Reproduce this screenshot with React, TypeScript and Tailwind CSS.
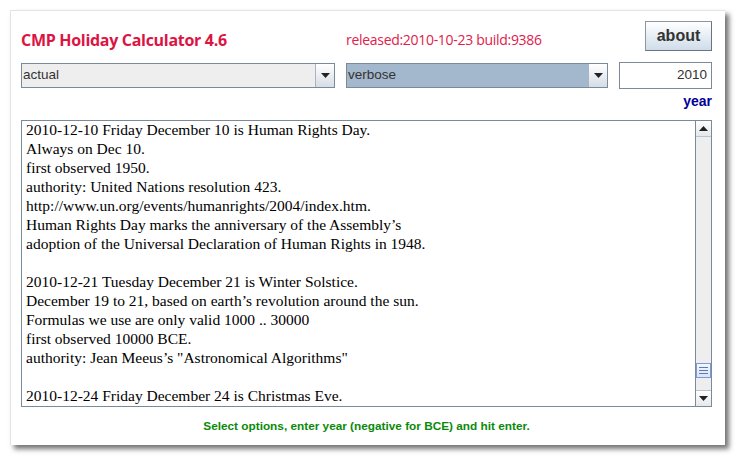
const lines = [
  "2010-12-10 Friday December 10 is Human Rights Day.",
  "Always on Dec 10.",
  "first observed 1950.",
  "authority: United Nations resolution 423.",
  "http://www.un.org/events/humanrights/2004/index.htm.",
  "Human Rights Day marks the anniversary of the Assembly\u2019s",
  "adoption of the Universal Declaration of Human Rights in 1948.",
  "",
  "2010-12-21 Tuesday December 21 is Winter Solstice.",
  "December 19 to 21, based on earth\u2019s revolution around the sun.",
  "Formulas we use are only valid 1000 .. 30000",
  "first observed 10000 BCE.",
  "authority: Jean Meeus\u2019s \"Astronomical Algorithms\"",
  "",
  "2010-12-24 Friday December 24 is Christmas Eve.",
];

function Arrow({ down = true }: { down?: boolean }) {
  return (
    <svg width="9" height="5" viewBox="0 0 9 5">
      <path d={down ? "M0 0h9L4.5 5z" : "M0 5h9L4.5 0z"} fill="#222" />
    </svg>
  );
}

function Combo({ label, bg, width }: { label: string; bg: string; width: string }) {
  return (
    <div className={`flex h-[25px] ${width} border border-[#7a8a99] ${bg}`}>
      <div className="flex flex-1 items-center pl-[1px] text-[13.5px] text-[#333]">{label}</div>
      <div className="flex w-[19px] items-center justify-center border-l border-[#a8b4c0] bg-gradient-to-b from-[#ffffff] to-[#d6dde6]">
        <Arrow />
      </div>
    </div>
  );
}

export default function App() {
  return (
    <div className="h-[455px] w-[735px] bg-white pl-[10px] pt-[10px] font-['Liberation_Sans',Arial,sans-serif]">
      <div className="flex h-[435px] w-[715px] flex-col border-l border-t border-[#e4e4e4] bg-white pl-[10px] pr-[13px] pt-[10px] shadow-[4px_4px_5px_rgba(0,0,0,0.55)]">
        <div className="flex h-[30px] items-center">
          <div className="w-[325px] pt-[7px] font-['Open_Sans',sans-serif] text-[16px] font-bold tracking-[-0.3px] text-[#dc1443]">
            CMP Holiday Calculator 4.6
          </div>
          <div className="flex-1 pt-[7px] font-['Open_Sans',sans-serif] text-[14px] tracking-[-0.3px] text-[#e0204c]">
            released:2010-10-23 build:9386
          </div>
          <button className="h-[30px] w-[67px] border border-[#8a96a2] border-b-[#6a747e] border-r-[#6a747e] bg-gradient-to-b from-[#ffffff] to-[#cfdde9] text-[16px] font-bold text-[#333]">
            about
          </button>
        </div>
        <div className="mt-[11px] flex items-center">
          <Combo label="actual" bg="bg-[#eeeeee]" width="w-[315px]" />
          <div className="w-[11px]" />
          <Combo label="verbose" bg="bg-[#a3b8cc]" width="w-[263px]" />
          <div className="w-[11px]" />
          <div className="flex h-[27px] w-[93px] items-center justify-end border border-[#7a8a99] bg-white pr-[4px] text-[13.5px] text-[#333]">
            2010
          </div>
        </div>
        <div className="mt-[3px] text-right text-[14px] font-bold leading-[18px] text-[#000099]">year</div>
        <div className="mt-[10px] flex h-[287px] border border-[#7a8a99]">
          <div className="flex-1 overflow-hidden pl-[4px] font-['Liberation_Serif',serif] text-[15.5px] leading-[19px] text-black">
            {lines.map((l, i) => (
              <div key={i} className="-mt-[1px] mb-[1px] h-[19px] whitespace-pre">
                {l}
              </div>
            ))}
          </div>
          <div className="flex w-[16px] flex-col border-l border-[#7a8a99] bg-[#eeeeee]">
            <div className="flex h-[16px] items-center justify-center border-b border-[#b8c4d0] bg-gradient-to-b from-[#ffffff] to-[#e4e8ec]">
              <Arrow down={false} />
            </div>
            <div className="flex-1" />
            <div className="flex h-[15px] flex-col items-center justify-center gap-[2px] border border-[#7a9ad8] bg-gradient-to-b from-[#f4f8ff] to-[#d8e4f8]">
              <div className="h-[1px] w-[9px] bg-[#5a7ab8]" />
              <div className="h-[1px] w-[9px] bg-[#5a7ab8]" />
              <div className="h-[1px] w-[9px] bg-[#5a7ab8]" />
            </div>
            <div className="h-[12px]" />
            <div className="flex h-[16px] items-center justify-center border-t border-[#b8c4d0] bg-gradient-to-b from-[#ffffff] to-[#e4e8ec]">
              <Arrow />
            </div>
          </div>
        </div>
        <div className="mt-[11px] text-center text-[11.8px] font-bold text-[#0a8a0a]">
          Select options, enter year (negative for BCE) and hit enter.
        </div>
      </div>
    </div>
  );
}
